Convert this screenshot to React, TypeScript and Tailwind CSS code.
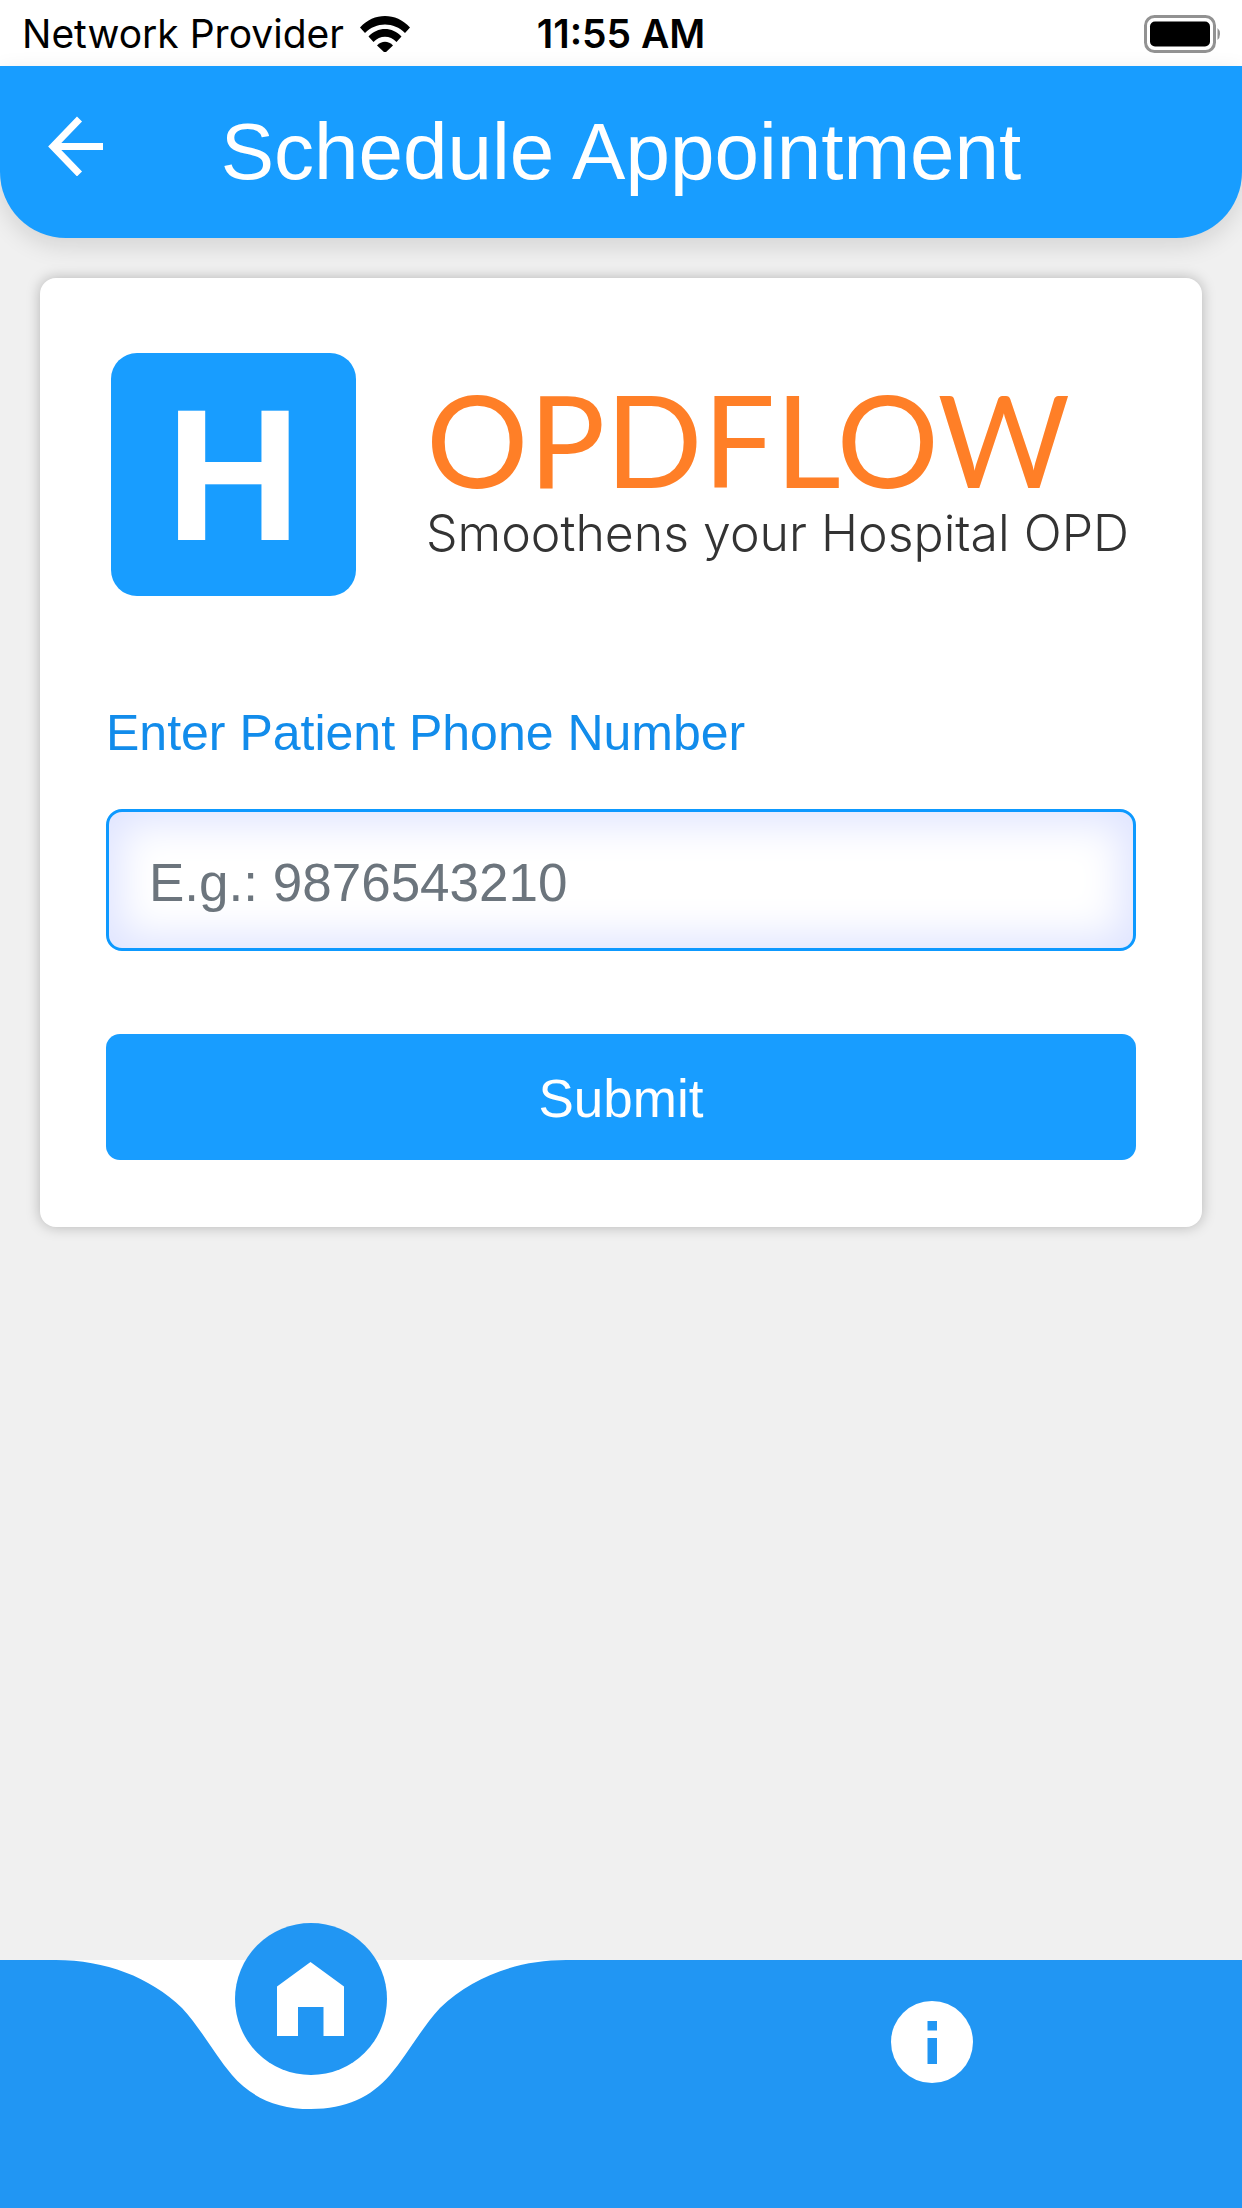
import { useState } from 'react';
import type { FormEvent } from 'react';

function StatusBar() {
  return (
    <div className="grid h-[66px] grid-cols-3 items-center bg-white px-[22px] pt-0.5 font-['Inter',sans-serif] text-[39px] text-black">
      <div className="flex items-center gap-4 whitespace-nowrap">
        <span>Network Provider</span>
        <svg viewBox="0 0 50 36" className="h-9 w-[50px] shrink-0" aria-hidden="true">
          <path d="M0 11.5C14-3.8 36-3.8 50 11.5L45 17C34 5.500 16 5.500 5 17z" />
          <path d="M8.500 20.500C17.500 10.500 32.500 10.500 41.500 20.500L36.500 26C30 19 20 19 13.500 26z" />
          <path d="M17 29.500C21.500 24.500 28.500 24.500 33 29.500L25 37z" />
        </svg>
      </div>
      <div className="text-center font-semibold whitespace-nowrap">11:55 AM</div>
      <svg viewBox="0 0 78 38" className="h-[38px] w-[78px] justify-self-end" aria-hidden="true">
        <rect x="3.500" y="1.500" width="69" height="35" rx="9" fill="none" stroke="#929292" strokeWidth="3" />
        <rect x="8" y="6.500" width="60" height="25" rx="5" />
        <path d="M75.500 13q2.500 2 2.500 6t-2.500 6z" fill="#929292" />
      </svg>
    </div>
  );
}

function Header() {
  return (
    <header className="relative flex h-[172px] items-center justify-center rounded-b-[66px] bg-[#189dff] shadow-[0_8px_24px_rgba(0,0,0,0.12)]">
      <button type="button" aria-label="Back" className="absolute top-[50px] left-[46px]">
        <svg viewBox="0 0 60 60" className="size-[60px]" fill="none" stroke="white" strokeWidth="7">
          <path d="M33.500 3L7 30.500L33.500 58M6 30.500H57" />
        </svg>
      </button>
      <h1 className="text-[80px] leading-none text-white">Schedule Appointment</h1>
    </header>
  );
}

function Logo() {
  return (
    <div className="flex items-center gap-[70px] pl-[5px]">
      <div className="flex h-[243px] w-[245px] shrink-0 items-center justify-center rounded-[26px] bg-[#189dff] text-[188px] leading-none font-bold text-white">
        H
      </div>
      <div className="pt-1 whitespace-nowrap">
        <div className="font-['Lato',sans-serif] text-[128px] leading-[112px] text-[#ff7f27]">OPDFLOW</div>
        <div className="font-['Inter',sans-serif] text-[50px] leading-[76px] font-light text-[#333333]">
          Smoothens your Hospital OPD
        </div>
      </div>
    </div>
  );
}

function BottomNav() {
  return (
    <nav className="grid h-[248px] grid-cols-2 bg-[#2196f3]">
      <div className="relative flex justify-center">
        {/* White notch under the active tab */}
        <svg viewBox="0 0 510 149" className="absolute top-0 h-[149px] w-[510px]" fill="white" aria-hidden="true">
          <path d="M0 0C49 0 94 17 126 48C146 70 159 95 176 115C195 137 220 149 255 149C290 149 315 137 334 115C351 95 364 70 384 48C416 17 461 0 510 0z" />
        </svg>
        <a href="#home" aria-label="Home" className="relative -mt-[37px] flex size-[152px] items-center justify-center rounded-full bg-[#2196f3]">
          <svg viewBox="0 0 67 74" className="h-[74px] w-[67px]" fill="white">
            <path d="M33.500 0L67 24.500V74H46.500V45H21V74H0V24.500z" />
          </svg>
        </a>
      </div>
      <div className="flex justify-center pt-[41px]">
        <a href="#info" aria-label="Info" className="size-[82px]">
          <svg viewBox="0 0 82 82" className="size-[82px]">
            <circle cx="41" cy="41" r="41" fill="white" />
            <path d="M36.500 20h9.500v9.500h-9.500zM36.500 37h9.500v26h-9.500z" fill="#2196f3" />
          </svg>
        </a>
      </div>
    </nav>
  );
}

export default function App() {
  const [phone, setPhone] = useState('');

  const handleSubmit = (e: FormEvent) => {
    e.preventDefault();
  };

  return (
    <div className="flex min-h-screen flex-col bg-[#f0f0f0] font-['Liberation_Sans',Arial,sans-serif]">
      <StatusBar />
      <Header />

      <main className="flex-1 p-10">
        <div className="rounded-2xl bg-white px-[66px] pt-[75px] pb-[67px] shadow-[0_0_14px_rgba(0,0,0,0.25)]">
          <Logo />
          <form onSubmit={handleSubmit} className="mt-[107px] flex flex-col">
            <label htmlFor="phone" className="text-[50px] leading-[60px] text-[#128ceb]">
              Enter Patient Phone Number
            </label>
            <input
              id="phone"
              type="tel"
              value={phone}
              onChange={(e) => setPhone(e.target.value)}
              placeholder="E.g.: 9876543210"
              className="mt-[46px] h-[142px] w-full rounded-2xl border-3 border-[#0d99ff] bg-white px-10 pt-1 text-[53px] text-black shadow-[inset_0_0_40px_12px_#dfe4ff] outline-none placeholder:text-[#6c757d]"
            />
            <button type="submit" className="mt-[83px] h-[126px] w-full rounded-[14px] bg-[#189dff] pt-1 text-[53px] text-white">
              Submit
            </button>
          </form>
        </div>
      </main>

      <BottomNav />
    </div>
  );
}
